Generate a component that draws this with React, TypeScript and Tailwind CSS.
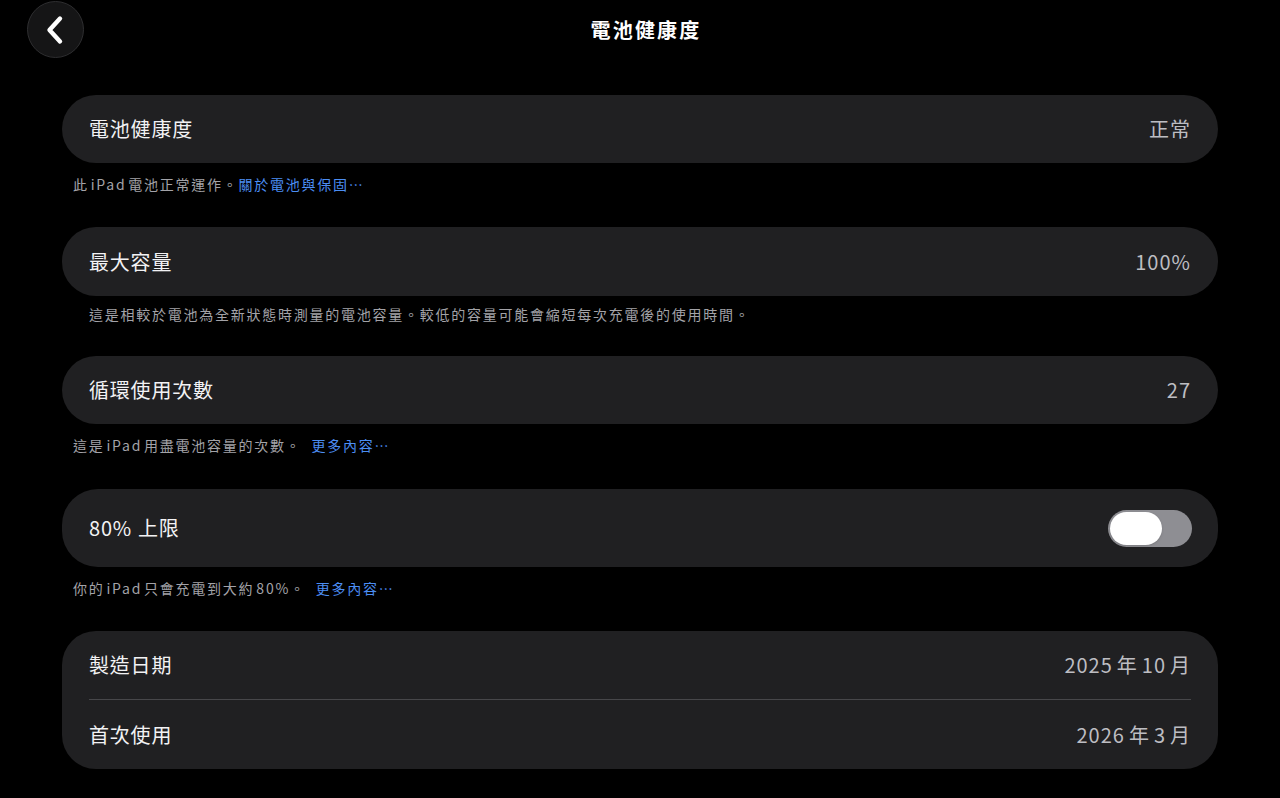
import { useState } from "react"

const font = { fontFamily: '"Noto Sans CJK TC", "Noto Sans", sans-serif' }

type RowProps = {
  label: React.ReactNode
  value?: React.ReactNode
  children?: React.ReactNode
}

function Row({ label, value, children }: RowProps) {
  return (
    <div className="flex items-center justify-between">
      <span className="text-[20px] tracking-[0.8px] text-[#f2f2f4]">{label}</span>
      {value && <span className="text-[20px] tracking-[1px] text-[#bdbdc2]">{value}</span>}
      {children}
    </div>
  )
}

// latin words/numbers inside CJK text get a little air on both sides
function W({ children, tight }: { children: React.ReactNode; tight?: boolean }) {
  return <span className={tight ? "mx-[2px]" : "mx-[4px]"}>{children}</span>
}

function Note({
  children,
  link,
  indent,
  gap,
  className = "",
}: {
  children: React.ReactNode
  link?: string
  indent?: boolean
  gap?: boolean
  className?: string
}) {
  return (
    <p
      className={`h-[20px] text-[14px] leading-[20px] tracking-[1.75px] text-[#a3a3a8] ${indent ? "pl-[27px]" : "pl-[11px]"} ${className}`}
    >
      {children}
      {link && <span className={`text-[#4c8ef3] ${gap ? "ml-[10px]" : ""}`}>{link}</span>}
    </p>
  )
}

function Toggle({ on, onChange }: { on: boolean; onChange: (v: boolean) => void }) {
  return (
    <button
      onClick={() => onChange(!on)}
      className={`flex h-[37px] w-[84px] items-center rounded-full p-[2px] ${on ? "justify-end bg-[#34c759]" : "justify-start bg-[#8e8e93]"}`}
    >
      <span className="h-[33px] w-[52px] rounded-full bg-white shadow" />
    </button>
  )
}

export default function App() {
  const [limit, setLimit] = useState(false)

  return (
    <div className="min-h-[798px] w-full bg-black" style={font}>
      <header className="relative flex h-[60px] items-center justify-center">
        <button className="absolute left-[27px] top-[1px] flex h-[57px] w-[57px] items-center justify-center rounded-full border border-[#2e2e30] bg-[#151516]">
          <svg width="24" height="30" viewBox="0 0 24 30" fill="none">
            <path d="M16 3.5L5.5 15 16 26.5" stroke="white" strokeWidth="4.4" strokeLinecap="round" strokeLinejoin="round" />
          </svg>
        </button>
        <h1 className="pl-[12px] text-[20px] font-bold tracking-[2.2px] text-white">電池健康度</h1>
      </header>

      <main className="mx-[62px] mt-[35px] flex flex-col">
        <section>
          <div className="flex h-[68px] flex-col justify-center rounded-[34px] bg-[#202022] px-[27px]">
            <Row label="電池健康度" value="正常" />
          </div>
          <Note className="mt-[11px]" link="關於電池與保固⋯">
            此<W tight>iPad</W>電池正常運作。
          </Note>
        </section>

        <section className="mt-[33px]">
          <div className="flex h-[69px] flex-col justify-center rounded-[34px] bg-[#202022] px-[27px]">
            <Row label="最大容量" value="100%" />
          </div>
          <Note indent className="mt-[8px]">
            這是相較於電池為全新狀態時測量的電池容量。較低的容量可能會縮短每次充電後的使用時間。
          </Note>
        </section>

        <section className="mt-[32px]">
          <div className="flex h-[68px] flex-col justify-center rounded-[34px] bg-[#202022] px-[27px]">
            <Row label="循環使用次數" value="27" />
          </div>
          <Note gap className="mt-[11px]" link="更多內容⋯">
            這是<W tight>iPad</W>用盡電池容量的次數。
          </Note>
        </section>

        <section className="mt-[34px]">
          <div className="flex h-[78px] flex-col justify-center rounded-[36px] bg-[#202022] pl-[27px] pr-[26px]">
            <Row
              label={
                <>
                  80%<span className="ml-[6px]">上限</span>
                </>
              }
            >
              <Toggle on={limit} onChange={setLimit} />
            </Row>
          </div>
          <Note gap className="mt-[11px]" link="更多內容⋯">
            你的<W tight>iPad</W>只會充電到大約<span className="ml-[2px]">80%</span>。
          </Note>
        </section>

        <section className="mt-[33px] rounded-[34px] bg-[#202022] px-[27px]">
          <div className="flex h-[69px] flex-col justify-center border-b border-[#47474a]">
            <Row
              label="製造日期"
              value={
                <>
                  2025<W>年</W>10<span className="ml-[4px]">月</span>
                </>
              }
            />
          </div>
          <div className="flex h-[69px] flex-col justify-center">
            <Row
              label="首次使用"
              value={
                <>
                  2026<W>年</W>3<span className="ml-[4px]">月</span>
                </>
              }
            />
          </div>
        </section>
      </main>
    </div>
  )
}
